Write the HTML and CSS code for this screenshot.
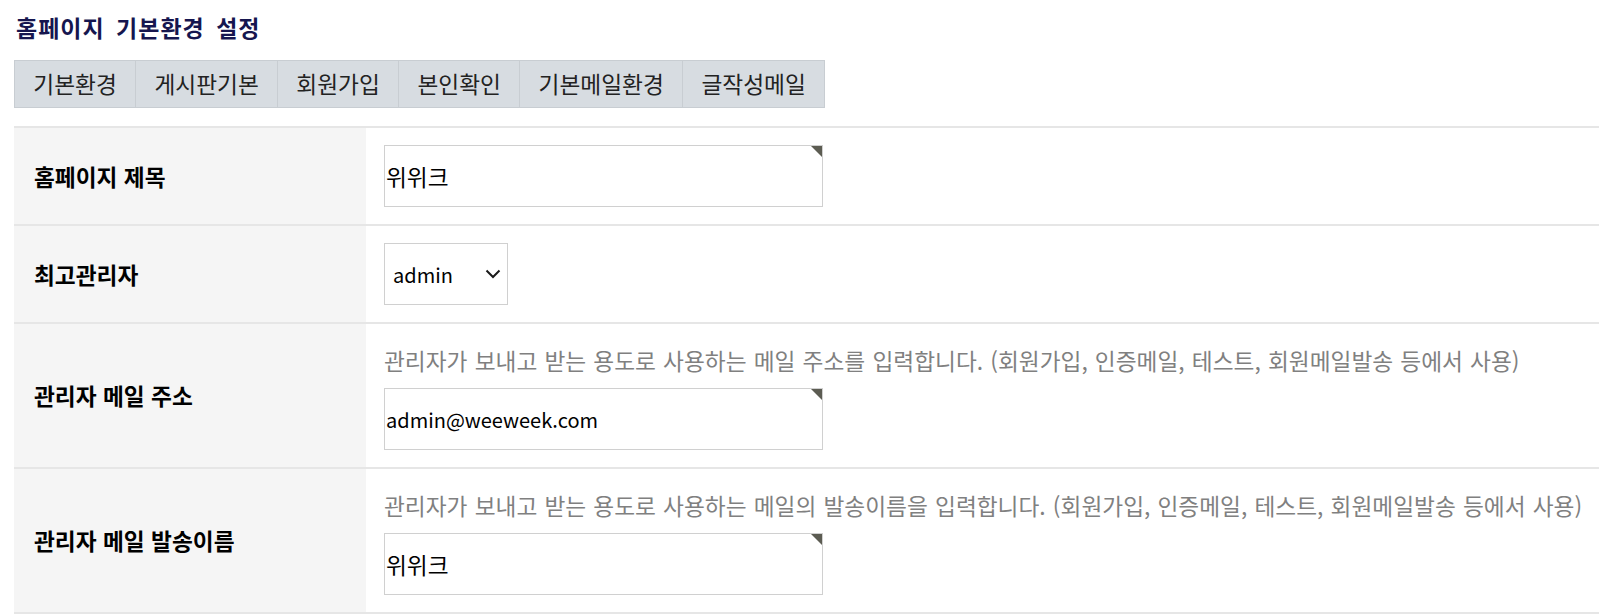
FILE: index.html
```html
<!DOCTYPE html>
<html lang="ko">
<head>
<meta charset="utf-8">
<title>홈페이지 기본환경 설정</title>
<link rel="stylesheet" href="styles.css">
</head>
<body>
<div class="page">
  <h1 class="title">홈페이지 기본환경 설정</h1>
  <nav class="tabs">
    <a class="tab">기본환경</a>
    <a class="tab">게시판기본</a>
    <a class="tab">회원가입</a>
    <a class="tab">본인확인</a>
    <a class="tab">기본메일환경</a>
    <a class="tab">글작성메일</a>
  </nav>
  <div class="form">
    <div class="row">
      <div class="label">홈페이지 제목</div>
      <div class="value">
        <div class="field"><input class="input" type="text" value="위위크"></div>
      </div>
    </div>
    <div class="row">
      <div class="label">최고관리자</div>
      <div class="value">
        <div class="select-wrap">
          <select class="select"><option>admin</option></select>
          <svg class="chevron" width="16" height="10" viewBox="0 0 16 10"><path d="M1.5 1.5 L8 8 L14.5 1.5" fill="none" stroke="#1a1a1a" stroke-width="2"/></svg>
        </div>
      </div>
    </div>
    <div class="row">
      <div class="label">관리자 메일 주소</div>
      <div class="value">
        <div class="help">관리자가 보내고 받는 용도로 사용하는 메일 주소를 입력합니다. (회원가입, 인증메일, 테스트, 회원메일발송 등에서 사용)</div>
        <div class="field"><input class="input input-latin" type="text" value="admin@weeweek.com"></div>
      </div>
    </div>
    <div class="row">
      <div class="label">관리자 메일 발송이름</div>
      <div class="value">
        <div class="help">관리자가 보내고 받는 용도로 사용하는 메일의 발송이름을 입력합니다. (회원가입, 인증메일, 테스트, 회원메일발송 등에서 사용)</div>
        <div class="field"><input class="input" type="text" value="위위크"></div>
      </div>
    </div>
  </div>
</div>
</body>
</html>
```

FILE: styles.css
```css
html, body {
  margin: 0;
  padding: 0;
  background: #fff;
}
body {
  font-family: "Noto Sans CJK KR", "Noto Sans", sans-serif;
  font-size: 22.7px;
  color: #000;
  overflow: hidden;
}
.page {
  padding: 12px 0 0 14px;
}
.title {
  margin: 0 0 18px 0;
  padding-left: 2px;
  font-size: 23px;
  line-height: 30px;
  font-weight: bold;
  color: #16164f;
  letter-spacing: 1px;
  word-spacing: 4px;
}
.tabs {
  display: inline-flex;
  border: 1px solid #c8cdd2;
  background: #d7dce1;
  margin-bottom: 18px;
}
.tab {
  display: block;
  height: 46px;
  line-height: 46px;
  padding: 0 18.3px;
  color: #222;
  border-left: 1px solid #c8cdd2;
  cursor: pointer;
}
.tab:first-child {
  border-left: 0;
}
.form {
  border-top: 2px solid #e6e6e6;
}
.row {
  display: grid;
  grid-template-columns: 352px 1fr;
  border-bottom: 2px solid #e6e6e6;
}
.label {
  background: #f5f5f5;
  padding-left: 20px;
  display: flex;
  align-items: center;
  font-weight: bold;
}
.value {
  padding: 17px 18px;
}
.help {
  margin: 5px 0 12px 0;
  line-height: 30px;
  color: #808080;
  white-space: nowrap;
  word-spacing: 0.8px;
}
.field {
  position: relative;
  width: 439px;
}
.field::after {
  content: "";
  position: absolute;
  top: 1px;
  right: 1px;
  width: 0;
  height: 0;
  border-top: 11px solid #5c5c52;
  border-left: 11px solid transparent;
}
.input {
  box-sizing: border-box;
  display: block;
  width: 439px;
  height: 62px;
  margin: 0;
  padding: 0 1px;
  border: 1px solid #d0d0d0;
  font: inherit;
  color: #000;
  background: #fff;
  outline: none;
}
.input-latin {
  font-size: 20px;
}
.select-wrap {
  position: relative;
  width: 124px;
}
.select {
  box-sizing: border-box;
  display: block;
  width: 124px;
  height: 62px;
  margin: 0;
  padding: 0 0 0 8px;
  border: 1px solid #d0d0d0;
  border-radius: 0;
  background: #fff;
  font: inherit;
  font-size: 20px;
  color: #000;
  -webkit-appearance: none;
  appearance: none;
}
.chevron {
  position: absolute;
  right: 7px;
  top: 26px;
  pointer-events: none;
}
```
